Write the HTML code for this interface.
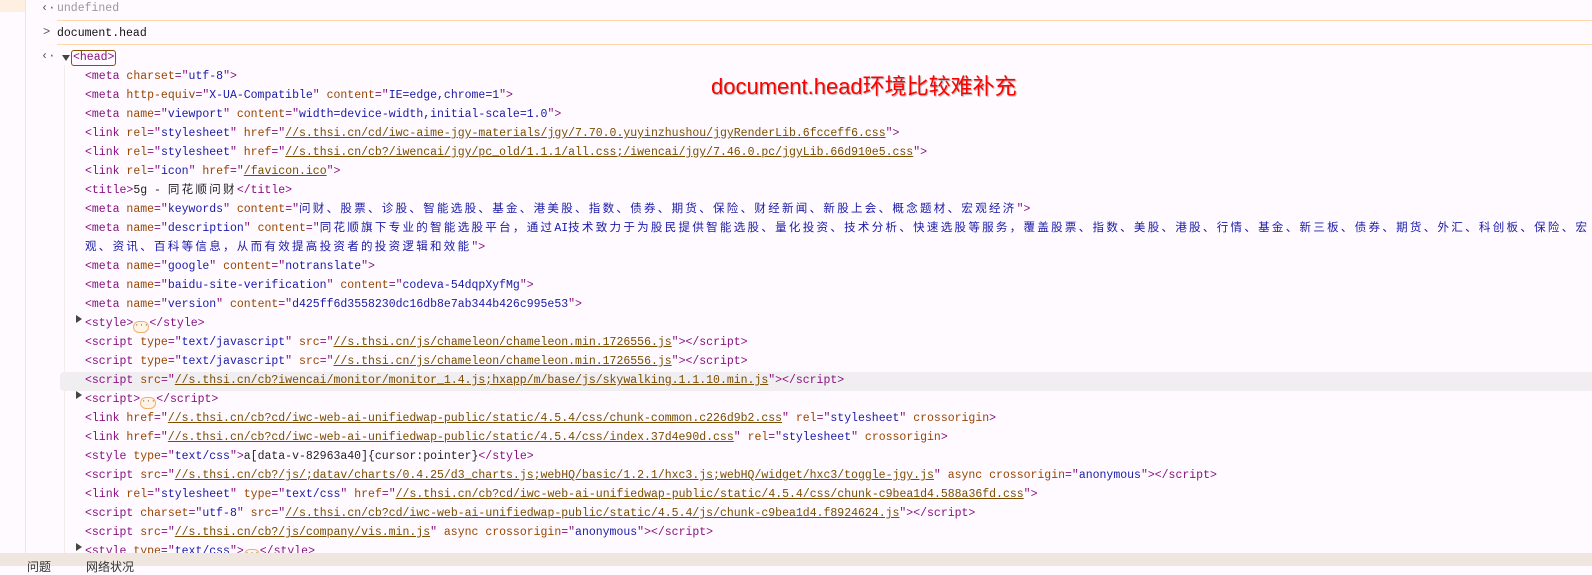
<!DOCTYPE html>
<html><head><meta charset="utf-8">
<style>
html,body{margin:0;padding:0}
body{width:1592px;height:566px;overflow:hidden;background:#fefaff;position:relative;font-family:"Liberation Mono","Noto Sans CJK SC",monospace;font-size:11.5px;color:#222}
.g1{position:absolute;left:25px;top:0;width:1px;height:566px;background:#fde3c4}
.g2{position:absolute;left:64px;top:65px;width:1px;height:490px;background:#f4ece8}
.hl{position:absolute;left:0;top:0;width:25px;height:12px;background:#fdf0e0}
.sep{position:absolute;left:57px;right:0;height:1px;background:#fdd9a8}
.r{position:absolute;white-space:pre;line-height:19px;height:19px}
.t{color:#881280}.a{color:#994500}.v{color:#1a1aa6}
.u{color:#7a4d00;text-decoration:underline}
.c{letter-spacing:2.3px;font-family:"Liberation Mono","Noto Sans CJK SC",monospace}
.tri{position:absolute;width:0;height:0;border-top:4px solid transparent;border-bottom:4px solid transparent;border-left:6px solid #444}
.dots{display:inline-block;width:14px;height:10px;border:1px solid #f0b070;border-radius:6px;background:#fff4e4;vertical-align:-1px;font-size:8px;line-height:8px;text-align:center;color:#666}
.note{position:absolute;left:711px;top:69px;font-family:"Liberation Sans","Noto Sans CJK SC",sans-serif;font-size:22px;color:#f00;text-shadow:1px 1px 1px #aaa,-1px -1px 0 #fff;white-space:nowrap}
.bar{position:absolute;left:0;top:553px;width:1592px;height:13px;background:#efe6e0;font-family:"Liberation Sans","Noto Sans CJK SC",sans-serif;font-size:12px;color:#333}
.arr{position:absolute;color:#555;font-size:12px}
</style></head><body>
<div class="hl"></div>
<div class="g1"></div><div class="g2"></div>
<div class="sep" style="top:20px"></div>
<div class="sep" style="top:44px"></div>

<div class="arr" style="left:41px;top:1px">&#8249;&middot;</div>
<div class="r" style="left:57px;top:-1px;color:#999">undefined</div>
<div class="arr" style="left:43px;top:25px">&gt;</div>
<div class="r" style="left:57px;top:24px;color:#111">document.head</div>
<div class="arr" style="left:41px;top:49px">&#8249;&middot;</div>
<div style="position:absolute;left:62px;top:55px;border-left:4px solid transparent;border-right:4px solid transparent;border-top:6px solid #444"></div>
<div style="position:absolute;left:71px;top:50px;width:43px;height:14px;border:1.5px solid #8a5200;border-radius:3px"></div>
<div class="r t" style="left:73px;top:48px">&lt;head&gt;</div>

<div class="note">document.head环境比较难补充</div>

<div class="r" style="left:85px;top:67px"><span class="t">&lt;meta </span><span class="a">charset</span><span class="t">="</span><span class="v">utf-8</span><span class="t">"&gt;</span></div>
<div class="r" style="left:85px;top:86px"><span class="t">&lt;meta </span><span class="a">http-equiv</span><span class="t">="</span><span class="v">X-UA-Compatible</span><span class="t">" </span><span class="a">content</span><span class="t">="</span><span class="v">IE=edge,chrome=1</span><span class="t">"&gt;</span></div>
<div class="r" style="left:85px;top:105px"><span class="t">&lt;meta </span><span class="a">name</span><span class="t">="</span><span class="v">viewport</span><span class="t">" </span><span class="a">content</span><span class="t">="</span><span class="v">width=device-width,initial-scale=1.0</span><span class="t">"&gt;</span></div>
<div class="r" style="left:85px;top:124px"><span class="t">&lt;link </span><span class="a">rel</span><span class="t">="</span><span class="v">stylesheet</span><span class="t">" </span><span class="a">href</span><span class="t">="</span><span class="u">//s.thsi.cn/cd/iwc-aime-jgy-materials/jgy/7.70.0.yuyinzhushou/jgyRenderLib.6fcceff6.css</span><span class="t">"&gt;</span></div>
<div class="r" style="left:85px;top:143px"><span class="t">&lt;link </span><span class="a">rel</span><span class="t">="</span><span class="v">stylesheet</span><span class="t">" </span><span class="a">href</span><span class="t">="</span><span class="u">//s.thsi.cn/cb?/iwencai/jgy/pc_old/1.1.1/all.css;/iwencai/jgy/7.46.0.pc/jgyLib.66d910e5.css</span><span class="t">"&gt;</span></div>
<div class="r" style="left:85px;top:162px"><span class="t">&lt;link </span><span class="a">rel</span><span class="t">="</span><span class="v">icon</span><span class="t">" </span><span class="a">href</span><span class="t">="</span><span class="u">/favicon.ico</span><span class="t">"&gt;</span></div>
<div class="r" style="left:85px;top:181px"><span class="t">&lt;title&gt;</span>5g - <span class="c">同花顺问财</span><span class="t">&lt;/title&gt;</span></div>
<div class="r" style="left:85px;top:200px"><span class="t">&lt;meta </span><span class="a">name</span><span class="t">="</span><span class="v">keywords</span><span class="t">" </span><span class="a">content</span><span class="t">="</span><span class="v c">问财、股票、诊股、智能选股、基金、港美股、指数、债券、期货、保险、财经新闻、新股上会、概念题材、宏观经济</span><span class="t">"&gt;</span></div>
<div class="r" style="left:85px;top:219px"><span class="t">&lt;meta </span><span class="a">name</span><span class="t">="</span><span class="v">description</span><span class="t">" </span><span class="a">content</span><span class="t">="</span><span class="v c">同花顺旗下专业的智能选股平台，通过</span><span class="v">AI</span><span class="v c">技术致力于为股民提供智能选股、量化投资、技术分析、快速选股等服务，覆盖股票、指数、美股、港股、行情、基金、新三板、债券、期货、外汇、科创板、保险、宏</span></div>
<div class="r" style="left:85px;top:238px"><span class="v c">观、资讯、百科等信息，从而有效提高投资者的投资逻辑和效能</span><span class="t">"&gt;</span></div>
<div class="r" style="left:85px;top:257px"><span class="t">&lt;meta </span><span class="a">name</span><span class="t">="</span><span class="v">google</span><span class="t">" </span><span class="a">content</span><span class="t">="</span><span class="v">notranslate</span><span class="t">"&gt;</span></div>
<div class="r" style="left:85px;top:276px"><span class="t">&lt;meta </span><span class="a">name</span><span class="t">="</span><span class="v">baidu-site-verification</span><span class="t">" </span><span class="a">content</span><span class="t">="</span><span class="v">codeva-54dqpXyfMg</span><span class="t">"&gt;</span></div>
<div class="r" style="left:85px;top:295px"><span class="t">&lt;meta </span><span class="a">name</span><span class="t">="</span><span class="v">version</span><span class="t">" </span><span class="a">content</span><span class="t">="</span><span class="v">d425ff6d3558230dc16db8e7ab344b426c995e53</span><span class="t">"&gt;</span></div>
<div class="tri" style="left:76px;top:315px"></div>
<div class="r" style="left:85px;top:314px"><span class="t">&lt;style&gt;</span><span class="dots">···</span><span class="t">&lt;/style&gt;</span></div>
<div class="r" style="left:85px;top:333px"><span class="t">&lt;script </span><span class="a">type</span><span class="t">="</span><span class="v">text/javascript</span><span class="t">" </span><span class="a">src</span><span class="t">="</span><span class="u">//s.thsi.cn/js/chameleon/chameleon.min.1726556.js</span><span class="t">"&gt;&lt;/script&gt;</span></div>
<div class="r" style="left:85px;top:352px"><span class="t">&lt;script </span><span class="a">type</span><span class="t">="</span><span class="v">text/javascript</span><span class="t">" </span><span class="a">src</span><span class="t">="</span><span class="u">//s.thsi.cn/js/chameleon/chameleon.min.1726556.js</span><span class="t">"&gt;&lt;/script&gt;</span></div>
<div style="position:absolute;left:60px;top:372px;width:1532px;height:19px;background:#f1eef1;border-radius:4px 0 0 4px"></div>
<div class="r" style="left:85px;top:371px"><span class="t">&lt;script </span><span class="a">src</span><span class="t">="</span><span class="u">//s.thsi.cn/cb?iwencai/monitor/monitor_1.4.js;hxapp/m/base/js/skywalking.1.1.10.min.js</span><span class="t">"&gt;&lt;/script&gt;</span></div>
<div class="tri" style="left:76px;top:391px"></div>
<div class="r" style="left:85px;top:390px"><span class="t">&lt;script&gt;</span><span class="dots">···</span><span class="t">&lt;/script&gt;</span></div>
<div class="r" style="left:85px;top:409px"><span class="t">&lt;link </span><span class="a">href</span><span class="t">="</span><span class="u">//s.thsi.cn/cb?cd/iwc-web-ai-unifiedwap-public/static/4.5.4/css/chunk-common.c226d9b2.css</span><span class="t">" </span><span class="a">rel</span><span class="t">="</span><span class="v">stylesheet</span><span class="t">" </span><span class="a">crossorigin</span><span class="t">&gt;</span></div>
<div class="r" style="left:85px;top:428px"><span class="t">&lt;link </span><span class="a">href</span><span class="t">="</span><span class="u">//s.thsi.cn/cb?cd/iwc-web-ai-unifiedwap-public/static/4.5.4/css/index.37d4e90d.css</span><span class="t">" </span><span class="a">rel</span><span class="t">="</span><span class="v">stylesheet</span><span class="t">" </span><span class="a">crossorigin</span><span class="t">&gt;</span></div>
<div class="r" style="left:85px;top:447px"><span class="t">&lt;style </span><span class="a">type</span><span class="t">="</span><span class="v">text/css</span><span class="t">"&gt;</span>a[data-v-82963a40]{cursor:pointer}<span class="t">&lt;/style&gt;</span></div>
<div class="r" style="left:85px;top:466px"><span class="t">&lt;script </span><span class="a">src</span><span class="t">="</span><span class="u">//s.thsi.cn/cb?/js/;datav/charts/0.4.25/d3_charts.js;webHQ/basic/1.2.1/hxc3.js;webHQ/widget/hxc3/toggle-jgy.js</span><span class="t">" </span><span class="a">async crossorigin</span><span class="t">="</span><span class="v">anonymous</span><span class="t">"&gt;&lt;/script&gt;</span></div>
<div class="r" style="left:85px;top:485px"><span class="t">&lt;link </span><span class="a">rel</span><span class="t">="</span><span class="v">stylesheet</span><span class="t">" </span><span class="a">type</span><span class="t">="</span><span class="v">text/css</span><span class="t">" </span><span class="a">href</span><span class="t">="</span><span class="u">//s.thsi.cn/cb?cd/iwc-web-ai-unifiedwap-public/static/4.5.4/css/chunk-c9bea1d4.588a36fd.css</span><span class="t">"&gt;</span></div>
<div class="r" style="left:85px;top:504px"><span class="t">&lt;script </span><span class="a">charset</span><span class="t">="</span><span class="v">utf-8</span><span class="t">" </span><span class="a">src</span><span class="t">="</span><span class="u">//s.thsi.cn/cb?cd/iwc-web-ai-unifiedwap-public/static/4.5.4/js/chunk-c9bea1d4.f8924624.js</span><span class="t">"&gt;&lt;/script&gt;</span></div>
<div class="r" style="left:85px;top:523px"><span class="t">&lt;script </span><span class="a">src</span><span class="t">="</span><span class="u">//s.thsi.cn/cb?/js/company/vis.min.js</span><span class="t">" </span><span class="a">async crossorigin</span><span class="t">="</span><span class="v">anonymous</span><span class="t">"&gt;&lt;/script&gt;</span></div>
<div class="tri" style="left:76px;top:543px"></div>
<div class="r" style="left:85px;top:542px"><span class="t">&lt;style </span><span class="a">type</span><span class="t">="</span><span class="v">text/css</span><span class="t">"&gt;</span><span class="dots">···</span><span class="t">&lt;/style&gt;</span></div>

<div class="bar"><span style="position:absolute;left:27px;top:5px">问题</span><span style="position:absolute;left:86px;top:5px">网络状况</span></div>
</body></html>
